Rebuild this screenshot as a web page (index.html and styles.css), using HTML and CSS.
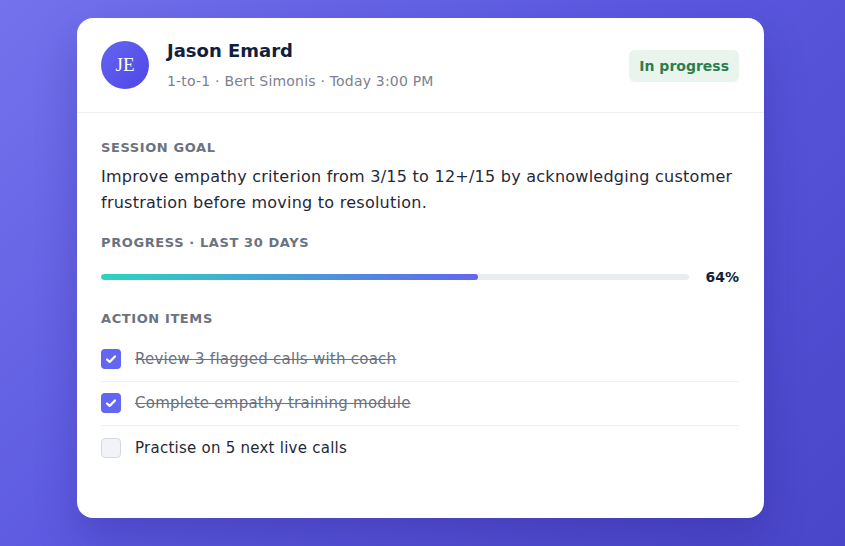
FILE: index.html
```html
<!DOCTYPE html>
<html>
<head>
<meta charset="utf-8">
<link rel="stylesheet" href="styles.css">
</head>
<body>
<div class="card">
  <div class="header">
    <div class="avatar">JE</div>
    <div class="who">
      <div class="name">Jason Emard</div>
      <div class="meta">1-to-1 · Bert Simonis · Today 3:00 PM</div>
    </div>
    <div class="badge">In progress</div>
  </div>
  <div class="body">
    <div class="label">Session goal</div>
    <p class="goal">Improve empathy criterion from 3/15 to 12+/15 by acknowledging customer frustration before moving to resolution.</p>
    <div class="label">Progress · Last 30 days</div>
    <div class="progress">
      <div class="track"><div class="fill" style="width:64%"></div></div>
      <span class="pct">64%</span>
    </div>
    <div class="label">Action items</div>
    <ul class="items">
      <li class="item done"><span class="box"><svg viewBox="0 0 20 20" width="20" height="20"><path d="M6 10.5l2.6 2.4L14 7.5" fill="none" stroke="#fff" stroke-width="2.2" stroke-linecap="round" stroke-linejoin="round"/></svg></span><span class="txt">Review 3 flagged calls with coach</span></li>
      <li class="item done"><span class="box"><svg viewBox="0 0 20 20" width="20" height="20"><path d="M6 10.5l2.6 2.4L14 7.5" fill="none" stroke="#fff" stroke-width="2.2" stroke-linecap="round" stroke-linejoin="round"/></svg></span><span class="txt">Complete empathy training module</span></li>
      <li class="item"><span class="box empty"></span><span class="txt">Practise on 5 next live calls</span></li>
    </ul>
  </div>
</div>
</body>
</html>
```
FILE: styles.css
```css
* { box-sizing: border-box; }
html, body { margin: 0; height: 100%; }
body {
  background: linear-gradient(135deg, #7472ec 0%, #5c59e0 45%, #4a46c9 100%);
  font-family: "DejaVu Sans", "Open Sans", sans-serif;
  padding: 18px 0 0 77px;
}
.card {
  width: 687px;
  height: 500px;
  background: #fff;
  border-radius: 16px;
  box-shadow: 0 20px 40px rgba(30, 20, 120, 0.25);
  overflow: hidden;
}
.header {
  display: flex;
  align-items: center;
  padding: 21px 25px 22px 24px;
  border-bottom: 1px solid #eef0f3;
}
.avatar {
  width: 48px;
  height: 48px;
  border-radius: 50%;
  background: linear-gradient(135deg, #6366f1, #4f46e5);
  color: #fff;
  font-family: "Liberation Serif", serif;
  font-size: 19px;
  display: flex;
  align-items: center;
  justify-content: center;
  flex-shrink: 0;
}
.who { flex: 1; margin-left: 18px; }
.name { font-size: 18px; font-weight: 600; color: #0f1f3d; line-height: 24px; margin-top: 0; }
.meta { font-size: 14px; color: #7b8190; margin-top: 9px; line-height: 18px; letter-spacing: 0.2px; }
.badge {
  background: #e8f4ec;
  color: #2e7d4f;
  font-weight: 700;
  font-size: 14px;
  padding: 6px 10px;
  border-radius: 6px;
  line-height: 20px;
  margin-top: 2px;
}
.body { padding: 26px 25px 0 24px; }
.label {
  font-size: 13px;
  font-weight: 700;
  color: #6b7280;
  text-transform: uppercase;
  letter-spacing: 0.6px;
  line-height: 18px;
}
.goal {
  margin: 7px 0 18px;
  font-size: 16px;
  line-height: 26px;
  color: #1f2937;
  letter-spacing: 0.25px;
}
.progress {
  display: flex;
  align-items: center;
  margin: 17px 0 25px;
}
.track {
  flex: 1;
  height: 6px;
  background: #e9ecf0;
  border-radius: 3px;
  overflow: hidden;
}
.fill {
  height: 100%;
  border-radius: 3px;
  background: linear-gradient(90deg, #2dd4bf, #6366f1);
}
.pct { margin-left: 16px; font-weight: 700; font-size: 14px; color: #0f1f3d; }
.items { list-style: none; margin: 9px 0 0; padding: 0; }
.item {
  display: flex;
  align-items: center;
  height: 44.5px;
  border-bottom: 1px solid #eef0f3;
}
.item:last-child { border-bottom: none; }
.box {
  width: 20px;
  height: 20px;
  border-radius: 4px;
  background: #6366f1;
  flex-shrink: 0;
  display: flex;
}
.box.empty { background: #f1f3f6; border: 1px solid #d7dbe1; }
.txt { margin-left: 14px; font-size: 15px; color: #1f2937; letter-spacing: 0.25px; }
.done .txt { color: #6b7280; text-decoration: line-through; }
```
